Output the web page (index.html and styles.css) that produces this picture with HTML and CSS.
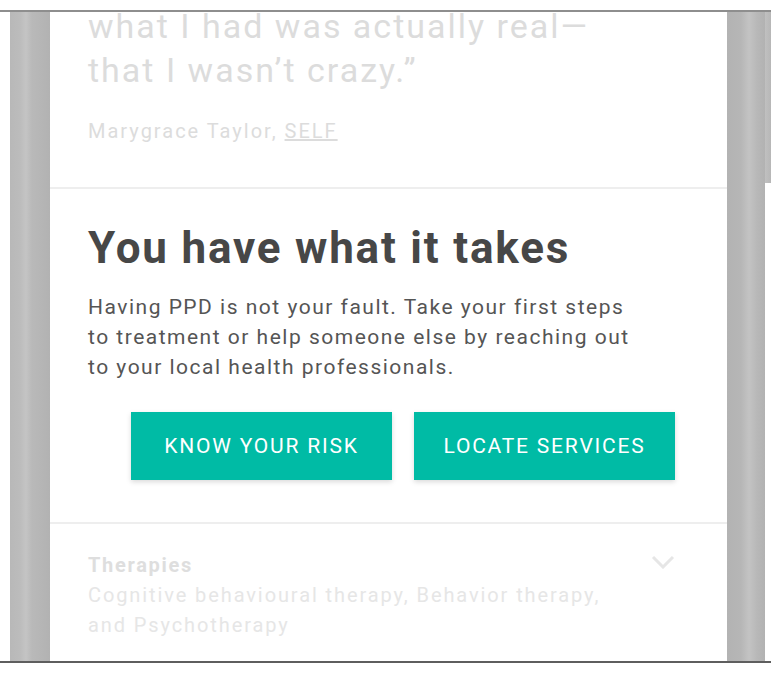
FILE: index.html
```html
<!DOCTYPE html>
<html>
<head>
<meta charset="utf-8">
<link rel="stylesheet" href="styles.css">
</head>
<body>
<div class="viewport">
  <div class="gutter-left"></div>
  <div class="bar-left"></div>
  <main class="content">
    <section class="quote">
      <p class="quote-text">what I had was actually real—<br>that I wasn’t crazy.”</p>
      <p class="quote-source">Marygrace Taylor, <span class="link">SELF</span></p>
    </section>
    <section class="cta">
      <h1 class="cta-title">You have what it takes</h1>
      <p class="cta-body">Having PPD is not your fault. Take your first steps to treatment or help someone else by reaching out to your local health professionals.</p>
      <div class="cta-buttons">
        <a class="btn">KNOW YOUR RISK</a>
        <a class="btn">LOCATE SERVICES</a>
      </div>
    </section>
    <section class="therapies">
      <div class="therapies-text">
        <div class="therapies-title">Therapies</div>
        <div class="therapies-desc">Cognitive behavioural therapy, Behavior therapy, and Psychotherapy</div>
      </div>
      <svg class="chevron" width="24" height="14" viewBox="0 0 24 14"><path d="M2 2 L12 12 L22 2" fill="none" stroke="#e6e6e6" stroke-width="3"/></svg>
    </section>
  </main>
  <div class="bar-right">
    <div class="scroll-thumb"></div>
  </div>
</div>
</body>
</html>
```
FILE: styles.css
```css
html, body {
  margin: 0;
  padding: 0;
  background: #ffffff;
}
body {
  font-family: Roboto, "Liberation Sans", sans-serif;
  width: 776px;
  height: 675px;
  overflow: hidden;
}
.viewport {
  margin-top: 10px;
  height: 649px;
  border-top: 2px solid #8e8e8e;
  border-bottom: 2px solid #5e5e5e;
  display: flex;
  width: 771px;
  overflow: hidden;
}
.gutter-left {
  width: 10px;
  flex: none;
  background: #fff;
}
.bar-left {
  width: 40px;
  flex: none;
  background: linear-gradient(90deg, #b8b8b8 0, #bcbcbc 10px, #c4c4c4 16px, #b9b9b9 22px, #b2b2b2 40px);
}
.bar-right {
  width: 44px;
  flex: none;
  display: flex;
  background: linear-gradient(90deg, #b3b3b3 0, #b6b6b6 14px, #c3c3c3 22px, #b8b8b8 30px, #b2b2b2 38px, #fff 38px);
}
.scroll-thumb {
  margin-left: 38px;
  width: 6px;
  height: 171px;
  background: linear-gradient(90deg, #c0c0c0, #b7b7b7);
}
.content {
  width: 677px;
  flex: none;
  background: #fff;
  overflow: hidden;
}
.quote {
  display: flow-root;
  padding: 0 38px;
  height: 175px;
  border-bottom: 2px solid #eeeeee;
}
.quote-text {
  margin: -8px 0 0 0;
  font-size: 34px;
  line-height: 44px;
  letter-spacing: 2px;
  color: #dcdcdc;
}
.quote-source {
  margin: 27px 0 0 0;
  font-size: 20px;
  letter-spacing: 2px;
  color: #dcdcdc;
}
.link {
  text-decoration: underline;
}
.cta {
  padding: 33px 38px 42px 38px;
  border-bottom: 2px solid #eeeeee;
}
.cta-title {
  margin: 0;
  font-size: 44px;
  line-height: 52px;
  font-weight: 700;
  letter-spacing: 1.8px;
  color: #474747;
}
.cta-body {
  margin: 18px 0 0 0;
  font-size: 21px;
  line-height: 30px;
  color: #555;
  width: 556px;
  letter-spacing: 1.5px;
}
.cta-buttons {
  margin: 30px 0 0 43px;
  display: flex;
  gap: 22px;
}
.btn {
  width: 261px;
  height: 68px;
  background: #00bba5;
  color: #fff;
  font-size: 21px;
  font-weight: 400;
  letter-spacing: 1.8px;
  display: flex;
  align-items: center;
  justify-content: center;
  box-shadow: 0 2px 5px rgba(0,0,0,0.15);
}
.therapies {
  padding: 26px 52px 0 38px;
  display: flex;
  justify-content: space-between;
}
.therapies-title {
  font-size: 20px;
  font-weight: 700;
  letter-spacing: 1.7px;
  color: #dedede;
  line-height: 30px;
}
.therapies-desc {
  font-size: 20px;
  line-height: 30px;
  letter-spacing: 1.9px;
  color: #e6e6e6;
  width: 540px;
}
.chevron {
  margin-top: 5px;
}
```
